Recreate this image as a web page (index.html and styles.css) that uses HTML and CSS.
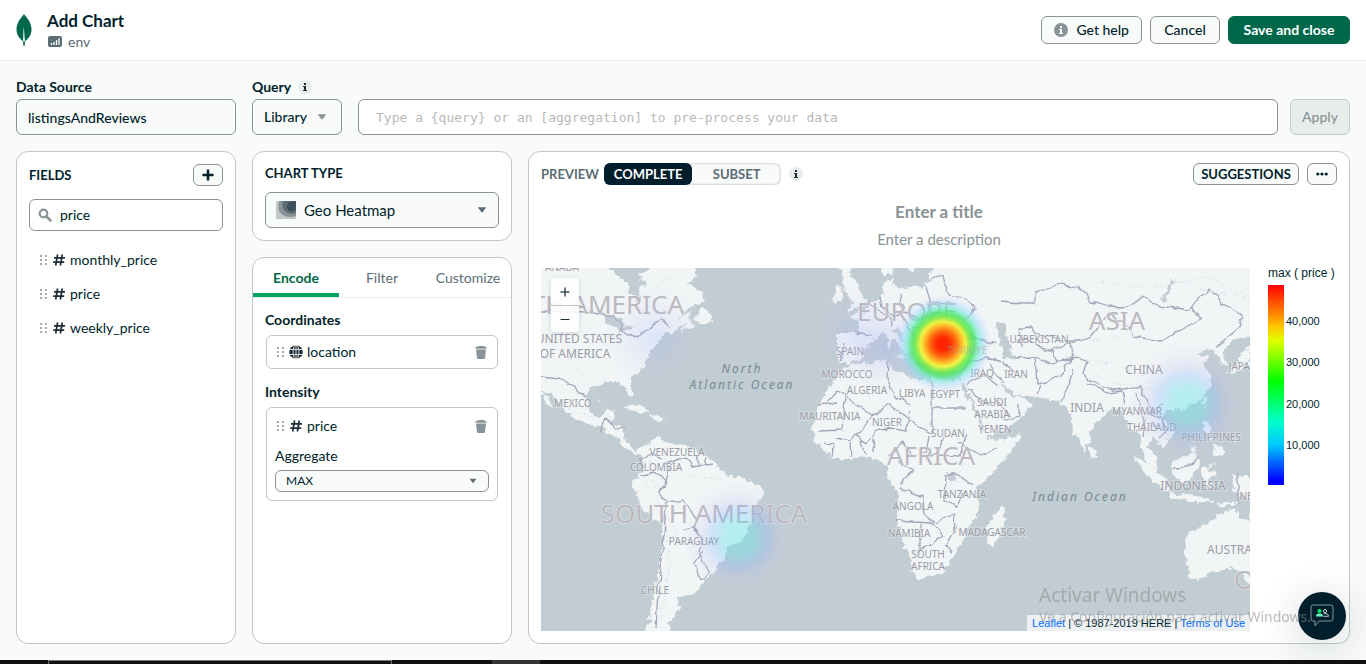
FILE: index.html
```html
<!DOCTYPE html>
<html lang="en">
<head>
<meta charset="utf-8">
<meta name="viewport" content="width=device-width, initial-scale=1">
<title>Add Chart</title>
<link rel="stylesheet" href="styles.css">
</head>
<body>
<svg class="defs" aria-hidden="true">
  <symbol id="drag" viewBox="0 0 8 12"><path fill="#a3abae" d="M0 1h2v2H0zM0 5h2v2H0zM0 9h2v2H0zM5 1h2v2H5zM5 5h2v2H5zM5 9h2v2H5z"/></symbol>
  <symbol id="hash" viewBox="0 0 12 12"><path d="M4.600 0.500 2.700 11.500M9.300 .5 7.400 11.500M1 3.800h11M.2 8.200h11" fill="none" stroke="#1c2d38" stroke-width="1.700"/></symbol>
  <symbol id="trash" viewBox="0 0 12 13"><path fill="#889397" d="M1 3.600h10L10 12q-.2 1-1 1H3q-.8 0-1-1z"/><path fill="#889397" d="M.5 1.500Q.5.8 2 .8L4 0h4l2 .8q1.500 0 1.500.7v1.300H.5z"/></symbol>
  <symbol id="caret" viewBox="0 0 10 6"><path d="M1.500 .3h7q.8 0 .3.600L5.500 5.200q-.5.600-1 0L1.200.900Q.7.300 1.500 .3z" fill="currentColor"/></symbol>
  <symbol id="info" viewBox="0 0 14 14"><circle cx="7" cy="7" r="7" class="info-disc"/><path class="info-mark" d="M6 3h2v2H6zM5 6h3v4h1v1H5v-1h1V7H5z"/></symbol>
</svg>

<header class="topbar">
  <svg class="leaf" viewBox="0 0 16 32" aria-label="MongoDB"><path fill="#00684a" d="M8 0c.8 1.800 7.500 7 7.500 15.500 0 6.500-4 9.500-6.500 12L8.600 32H7.500L7 27.500C4.500 25 .5 22 .5 15.500.5 7 7.200 1.800 8 0z"/><path fill="#fff" d="M7.700 12 7.100 26.500 8 28l.9-1.500z"/></svg>
  <div class="heading">
    <h1>Add Chart</h1>
    <p class="crumb"><svg width="14" height="11" viewBox="0 0 14 11" aria-hidden="true"><rect width="14" height="11" rx="2" fill="#5c6c75"/><path d="M3.500 7v2M6 6v3M8.500 4v5M11 2v7" stroke="#fff" stroke-width="1.300"/></svg>env</p>
  </div>
  <div class="actions">
    <button class="btn"><svg class="info-solid" width="14" height="14"><use href="#info"/></svg>Get help</button>
    <button class="btn">Cancel</button>
    <button class="btn primary">Save and close</button>
  </div>
</header>

<main class="workspace">
  <div class="source-row">
    <label for="source">Data Source</label>
    <span class="query-label"><label for="query">Query</label><svg class="info-soft" width="14" height="14"><use href="#info"/></svg></span>
    <input id="source" class="box source" value="listingsAndReviews" readonly>
    <div class="query-group">
      <button class="box library">Library<svg width="10" height="6"><use href="#caret"/></svg></button>
      <input id="query" class="box query" placeholder="Type a {query} or an [aggregation] to pre-process your data">
      <button class="box apply" disabled>Apply</button>
    </div>
  </div>

  <div class="panels">
    <section class="panel fields">
      <div class="fields-head"><h2>FIELDS</h2><button class="mini" aria-label="Add field"><svg width="12" height="12" viewBox="0 0 12 12"><path d="M6 .5v11M.5 6h11" stroke="#001e2b" stroke-width="2.500"/></svg></button></div>
      <div class="search">
        <svg width="14" height="14" viewBox="0 0 14 14" aria-hidden="true"><circle cx="5.500" cy="5.500" r="3.800" fill="none" stroke="#889397" stroke-width="2.200"/><path d="m8.500 8.500 4 4" stroke="#889397" stroke-width="2.500" stroke-linecap="round"/></svg>
        <input aria-label="Filter fields" value="price">
      </div>
      <ul>
        <li><svg width="8" height="12"><use href="#drag"/></svg><svg width="12" height="12"><use href="#hash"/></svg>monthly_price</li>
        <li><svg width="8" height="12"><use href="#drag"/></svg><svg width="12" height="12"><use href="#hash"/></svg>price</li>
        <li><svg width="8" height="12"><use href="#drag"/></svg><svg width="12" height="12"><use href="#hash"/></svg>weekly_price</li>
      </ul>
    </section>

    <div class="builder">
      <section class="panel chart-type">
        <h2><label for="type">CHART TYPE</label></h2>
        <div class="select type-select">
          <svg width="20" height="18" viewBox="0 0 20 18" aria-hidden="true"><rect width="20" height="18" rx="1" fill="#c1c7c6"/><path fill="#889397" d="M3 0h17v15q-6 2-11.500 0Q2 12 2.500 6z"/><path fill="#5c6c75" d="M7 0h13v12q-5 2-10-1Q5 7 7 0z"/><path fill="#3d4f58" d="M12 2q2-2 5-2h3v8q-3 3-6.500 2Q9.500 7.500 12 2z"/></svg>
          <select id="type"><option>Geo Heatmap</option></select>
          <svg class="arrow" width="10" height="6"><use href="#caret"/></svg>
        </div>
      </section>

      <section class="panel encode">
        <div class="tabs" role="tablist">
          <button role="tab" aria-selected="true">Encode</button>
          <button role="tab" aria-selected="false">Filter</button>
          <button role="tab" aria-selected="false">Customize</button>
        </div>
        <div class="channels">
          <h3>Coordinates</h3>
          <div class="card">
            <div class="encoded"><svg width="8" height="12"><use href="#drag"/></svg><svg width="14" height="14" viewBox="0 0 14 14"><circle cx="7" cy="7" r="6.800" fill="#1c2d38"/><g fill="none" stroke="#fff" stroke-width=".8"><ellipse cx="7" cy="7" rx="3" ry="7"/><path d="M7 0v14M0 4.500h14M0 9.500h14"/></g></svg><span>location</span><button aria-label="Remove location"><svg width="12" height="13"><use href="#trash"/></svg></button></div>
          </div>
          <h3>Intensity</h3>
          <div class="card tall">
            <div class="encoded"><svg width="8" height="12"><use href="#drag"/></svg><svg class="hash" width="14" height="12"><use href="#hash"/></svg><span>price</span><button aria-label="Remove price"><svg width="12" height="13"><use href="#trash"/></svg></button></div>
            <label for="agg">Aggregate</label>
            <div class="select agg-select"><select id="agg"><option>MAX</option></select><svg class="arrow" width="8" height="6"><use href="#caret"/></svg></div>
          </div>
        </div>
      </section>
    </div>

    <section class="panel preview">
      <div class="preview-head">
        <span class="caption">PREVIEW</span>
        <div class="toggle"><button aria-pressed="true">COMPLETE</button><button aria-pressed="false">SUBSET</button></div>
        <svg class="info-soft" width="14" height="14"><use href="#info"/></svg>
        <button class="mini suggestions">SUGGESTIONS</button>
        <button class="mini" aria-label="More"><svg width="12" height="4" viewBox="0 0 12 4" fill="#001e2b"><circle cx="1.800" cy="2" r="1.600"/><circle cx="6" cy="2" r="1.600"/><circle cx="10.200" cy="2" r="1.600"/></svg></button>
      </div>
      <input class="title" aria-label="Title" placeholder="Enter a title">
      <input class="description" aria-label="Description" placeholder="Enter a description">

      <div class="chart">
        <div class="map">
          <svg class="world" viewBox="541 268 709 363" role="img" aria-label="World map with price heat layer">
            <defs>
              <filter id="coast" x="0" y="0" width="100%" height="100%"><feTurbulence type="fractalNoise" baseFrequency=".16" numOctaves="3" seed="4"/><feDisplacementMap in="SourceGraphic" scale="8" xChannelSelector="R" yChannelSelector="G"/></filter>
              <filter id="wobble" x="0" y="0" width="100%" height="100%"><feTurbulence type="fractalNoise" baseFrequency=".12" numOctaves="1" seed="4"/><feDisplacementMap in="SourceGraphic" scale="7" xChannelSelector="R" yChannelSelector="G"/></filter>
              <radialGradient id="hot"><stop offset="0" stop-color="#ff2000"/><stop offset=".14" stop-color="#ff2a00"/><stop offset=".27" stop-color="#ff6a0c" stop-opacity=".98"/><stop offset=".38" stop-color="#ffb81f" stop-opacity=".95"/><stop offset=".46" stop-color="#f2f23a" stop-opacity=".93"/><stop offset=".56" stop-color="#74ea4a" stop-opacity=".92"/><stop offset=".64" stop-color="#4fe668" stop-opacity=".85"/><stop offset=".74" stop-color="#6feccb" stop-opacity=".65"/><stop offset=".84" stop-color="#94d8ff" stop-opacity=".4"/><stop offset="1" stop-color="#c9c9ff" stop-opacity="0"/></radialGradient>
              <radialGradient id="cool"><stop offset="0" stop-color="#60e6e6" stop-opacity=".46"/><stop offset=".3" stop-color="#68dfea" stop-opacity=".4"/><stop offset=".5" stop-color="#80b4ff" stop-opacity=".28"/><stop offset=".72" stop-color="#bcb8ee" stop-opacity=".16"/><stop offset="1" stop-color="#d4c8d8" stop-opacity="0"/></radialGradient>
              <radialGradient id="faint"><stop offset="0" stop-color="#96afff" stop-opacity=".24"/><stop offset=".5" stop-color="#b4b8f4" stop-opacity=".14"/><stop offset="1" stop-color="#d0c8e0" stop-opacity="0"/></radialGradient>
            </defs>
            <rect x="541" y="268" width="709" height="363" fill="#c2cdd3"/>
            <g filter="url(#coast)">
              <g fill="#f1f5f6">
                <path d="M530 255H608V268L620 278 628 285 630 294 637 302 643 300 640 290 645 283 639 275 650 268V255H696V275L687 283 703 292 704 302 690 307 678 319 690 312 688 319 695 326 680 332 687 323 673 332 663 336 657 345 650 351 648 362 640 372 632 378 631 385 634 394 629 397 624 386 618 382 607 382 601 385 590 387 586 398 590 412 600 417 606 410 615 409 613 418 611 424 622 427 624 440 636 450 646 447 657 437 672 444 687 445 698 452 712 459 717 464 722 473 747 480 762 488 764 495 754 507 752 520 743 540 727 547 725 556 713 573 702 582 697 593 678 598 680 610 668 623 673 640H646L650 613 655 590 660 563 663 540 662 523 652 518 643 510 637 493 632 483 642 470 643 457 623 447 618 437 600 428 570 417 561 406 555 397 541 387 530 380z"/>
                <path d="M701 309 707 311 713 321 705 324 692 321zM624 407 635 404 650 412 641 413zM650 415 659 416 666 420 655 421zM688 438l2 6M541 389l8 10 3 8-5-3-6-10z"/>
                <path d="M840 255H854L850 276 857 282 860 292 867 302 861 309 847 312 852 302 846 294 842 278zM836 283 843 287 841 300 832 304 835 291z"/>
                <path d="M879 255H902L893 268 891 275 882 273zM906 255H918L914 268 910 271zM884 283 892 277 894 286 900 289 911 286 923 286 931 281 926 274 937 267V255H1260V334L1233 340 1222 352 1228 363 1222 366 1219 357 1210 348 1202 351 1198 355 1209 356 1203 366 1211 376 1210 387 1199 402 1179 410 1166 410 1163 418 1175 430 1173 437 1162 447 1151 437 1148 446 1157 457 1158 471 1147 463 1141 446 1139 431 1129 427 1120 408 1111 409 1093 426 1090 440 1084 451 1074 433 1069 411 1058 402 1041 398 1015 394 1005 386 1001 383 1008 395 1024 397 1033 405 1023 416 1009 427 985 438 981 419 971 398 963 383 961 388 971 403 980 424 986 439 1006 440 1022 433 1016 445 1006 458 991 474 977 488 979 515 967 528 962 542 942 573 918 579 913 570 905 547 897 520 899 492 887 477 890 465 877 460 863 456 840 460 826 454 816 441 812 430 817 410 821 398 832 384 842 369 850 365 887 360 894 370 917 380 933 380 962 379 961 371 935 371 928 362 924 367 920 364 907 345 898 327 892 331 910 348 907 354 895 342 882 333 870 341 864 355 850 364 838 362 837 335 858 333 860 321 849 315 864 311 871 303 881 298z"/>
                <path d="M889 335h3v15h-4zM895 356l10-2-1 5zM1002 506 1006 520 994 546 987 543 988 524z"/>
                <path d="M1240 354 1250 348V365L1233 372 1226 374 1231 366 1240 364zM1090 446l5 4 1 7-4 2-2-6zM1204 398l3-2-2 10-3-1zM1205 419l5 6 0 10 5 6-6-3-5-8zM1214 444l9 4 0 9-10-3zM1190 450l8-6-6 10z"/>
                <path d="M1133 456 1147 462 1166 480 1170 493 1157 485 1143 470zM1173 462 1196 452 1200 462 1193 473 1187 485 1174 478zM1170 493 1204 497 1215 502 1194 502 1170 497zM1202 468 1219 464 1207 469 1218 475 1208 478 1214 489 1202 478zM1233 474 1260 480V504L1244 497 1232 489zM1215 504l25-3-15 6z"/>
                <path d="M1260 506 1253 506 1249 522 1237 517 1237 508 1223 512 1210 522 1201 528 1187 533 1184 550 1190 578 1197 580 1213 572 1233 568 1244 575 1248 583 1260 587z"/>
              </g>
              <path fill="#c2cdd3" d="M997 322l8 2 3 16 6 20-9-2-6-15zM939 332l18-9 13 7 8 10-20 1-18-1zM602 316l13-2 11 12 8 1-13 5-14-9zM945 474h10v6h-8zM1160 300l12-21 3 2-10 20z"/>
            </g>
            <path class="relief" filter="url(#coast)" d="M641 455 646 490 665 520 670 565 660 625M649 456 657 500 674 525 677 552M665 458 690 475 722 480M1055 350 1082 337 1105 342 1126 336M1080 360 1110 363 1142 374 1160 392M1100 282 1150 288 1210 276 1250 300M1096 375 1120 385 1155 390M565 355 585 380 610 418M552 398 577 413 600 420M900 335 922 344M950 490 970 455 988 440M1180 275 1200 290 1250 296M655 286 664 281 672 277"/>
            <path class="borders" filter="url(#wobble)" d="M541 311 592 312 605 315 619 321 626 336 638 335 650 328 663 318 669 328M541 377 560 379 572 385 585 396M600 431l6-12 4 5 10 6 6-3M643 471l-3-12 13-4 7 3M640 476 655 472 667 482 658 493 669 503 683 500 690 510 697 519 694 530 703 538 699 552 710 573 699 578 695 563 704 550M666 503 664 535 662 560 658 590 656 628M665 463 687 458 692 467 713 464M697 456l2 8M705 456l2 9M670 468 664 487M683 530l10-3 5 5M856 333 871 336M844 344 840 363M868 300 876 309 889 316 892 326M880 298 882 307 892 315 910 314 918 318 931 315 939 325M900 294 902 310M925 284 930 300 926 316M930 280 942 275 945 292 968 300 975 308 964 322M931 302 950 303M937 310 930 324 913 329M905 319 914 337 925 342M889 361 888 382 897 398 911 404M837 390 872 416 888 405 898 410M845 397 843 430 818 431M872 415 862 430 849 441 835 438M818 405 838 403M837 390 826 402M932 381V435L916 425 898 411M933 408H966M910 412 906 431 890 428 875 432 867 444 856 435M929 437 926 452 913 456 902 442 888 457M898 462 912 470 900 485M942 439 938 455 959 456 967 435M958 442 975 452 982 455 997 449M944 475 958 475 972 485M945 475 944 500 957 507 966 490M898 489 909 490 912 495 923 496 924 514 935 522 955 514 956 533 944 545 954 552M895 521 932 523 944 536 930 547 920 548 919 553M920 524V556M926 457 938 454M825 443l8 2-1 12M850 442l1 15M861 440l3 15M874 438l-1 15M960 373 970 362 987 358 997 377 1004 383M968 384 984 374 998 385M987 358 1002 362 1014 371M965 336 985 341 996 344M1000 301 1021 303 1035 303 1035 292 1054 286 1061 282 1072 289 1080 286 1090 302 1100 304 1110 307 1123 308 1143 297 1160 306 1190 310 1195 300 1210 290 1219 296 1223 304 1243 316 1240 327 1216 347M1191 306 1201 319 1178 331 1160 341 1133 336 1128 325 1108 314M1108 313 1090 337 1080 341 1068 341 1075 355 1057 363 1053 351 1037 347 1028 338 1017 340 1022 347 1020 329 1032 326 1035 335 1051 336 1067 341M1052 350 1070 342M1015 358 1033 357 1053 365 1073 357 1065 365 1062 374 1047 382 1037 384 1035 358M1073 357 1087 361 1083 373 1092 382 1111 390 1125 389 1140 385 1143 395 1153 411 1164 404M1088 383 1108 393 1122 391 1125 405M1137 393 1139 409 1145 420 1143 437M1149 413 1161 418 1166 432 1158 438M1150 422 1157 430M1037 394 1041 385M1061 402 1067 388 1073 370M1174 468 1189 467 1198 456M1238 474v30M1003 421 1019 416 1019 405M994 397 1011 417M969 389 982 401 995 403"/>
            <g class="labels minor">
              <text x="562" y="271">ANADA</text><text x="573" y="407">MEXICO</text><text x="677" y="456">VENEZUELA</text><text x="656" y="471">COLOMBIA</text><text x="694" y="545">PARAGUAY</text><text x="655" y="594">CHILE</text><text x="850" y="355">SPAIN</text><text x="847" y="378">MOROCCO</text><text x="867" y="394">ALGERIA</text><text x="912" y="397">LIBYA</text><text x="945" y="398">EGYPT</text><text x="830" y="420">MAURITANIA</text><text x="887" y="426">NIGER</text><text x="948" y="437">SUDAN</text><text x="982" y="377">IRAQ</text><text x="1016" y="378">IRAN</text><text x="992" y="406">SAUDI</text><text x="992" y="418">ARABIA</text><text x="995" y="433">YEMEN</text><text x="1039" y="343">UZBEKISTAN</text><text x="1137" y="415">MYANMAR</text><text x="1152" y="431">THAILAND</text><text x="1211" y="441">PHILIPPINES</text><text x="962" y="498">TANZANIA</text><text x="913" y="510">ANGOLA</text><text x="909" y="537">NAMIBIA</text><text x="992" y="536">MADAGASCAR</text><text x="928" y="558">SOUTH</text><text x="928" y="570">AFRICA</text><text x="1243" y="370">JAPAN</text><text x="1246" y="500">NE</text>
            </g>
            <g class="labels medium"><text class="end" x="622" y="343">UNITED STATES</text><text x="575" y="358">OF AMERICA</text><text x="1144" y="374">CHINA</text><text x="1087" y="412">INDIA</text><text x="1193" y="490">INDONESIA</text><text class="start" x="1207" y="554">AUSTRALIA</text></g>
            <g class="labels continent"><text class="end" x="684" y="314">NORTH AMERICA</text><text x="907" y="321">EUROPE</text><text x="1117" y="330">ASIA</text><text x="931" y="465">AFRICA</text><text x="704" y="523">SOUTH AMERICA</text><text class="start" x="1234" y="589">OCEANIA</text></g>
            <g class="labels ocean"><text x="742" y="373">North</text><text x="742" y="389">Atlantic Ocean</text><text x="1080" y="501">Indian Ocean</text></g>
            <circle cx="655" cy="338" r="52" fill="url(#faint)"/><circle cx="859" cy="335" r="54" fill="url(#faint)"/><circle cx="890" cy="350" r="42" fill="url(#faint)"/>
            <circle cx="739" cy="538" r="57" fill="url(#cool)"/><circle cx="1187" cy="404" r="60" fill="url(#cool)"/><circle cx="943" cy="344" r="49" fill="url(#hot)"/>
            <g class="labels minor hazy"><text x="967" y="354">TÜRKIYE</text></g>
          </svg>
          <div class="zoom"><button aria-label="Zoom in"><svg width="10" height="10" viewBox="0 0 10 10"><path d="M5 .5v9M.5 5h9" stroke="#3d4f58" stroke-width="1.500"/></svg></button><button aria-label="Zoom out"><svg width="10" height="10" viewBox="0 0 10 10"><path d="M.5 5.500h9" stroke="#1c2d38"/></svg></button></div>
          <div class="attribution"><a href="#">Leaflet</a> | © 1987-2019 HERE | <a href="#">Terms of Use</a></div>
        </div>
        <aside class="legend">
          <p>max ( price )</p>
          <div class="scale"><div class="ramp"></div><ol><li>40,000</li><li>30,000</li><li>20,000</li><li>10,000</li></ol></div>
        </aside>
      </div>
    </section>
  </div>
</main>

<footer class="taskbar"><span class="search-edge"></span><span class="active-edge"></span></footer>
<button class="chat" aria-label="Community chat"><svg width="24" height="24" viewBox="0 0 24 24"><path d="M3 1h18q2 0 2 2v12q0 2-2 2H9l-4 5v-5H3q-2 0-2-2V3q0-2 2-2z" fill="none" stroke="#889397"/><circle cx="9.500" cy="7" r="2" fill="#00ed64"/><path d="M6 12.500q0-3 3-3h1q3 0 3 3z" fill="#71f6ba"/><g fill="none" stroke="#c1c7c6"><circle cx="15" cy="7" r="1.600"/><path d="M13.500 9.700q5-.7 5 2.600h-5"/></g></svg></button>
<div class="activation"><strong>Activar Windows</strong><span>Ve a Configuración para activar Windows.</span></div>
</body>
</html>
```
FILE: styles.css
```css
* { box-sizing: border-box; }
body { margin: 0; min-height: 100vh; display: flex; flex-direction: column; background: #f9fbfa; color: #001e2b; font: 14px/20px Lato, "Open Sans", sans-serif; }
h1, h2, h3, p, ul, ol { margin: 0; padding: 0; }
ul, ol { list-style: none; }
button, input, select { font: inherit; color: inherit; margin: 0; }
button { display: flex; align-items: center; justify-content: center; padding: 0; }
svg { display: block; flex: none; }
.defs { position: absolute; width: 0; height: 0; }

.topbar { display: flex; align-items: center; height: 61px; padding: 0 16px; background: #fff; border-bottom: 1px solid #e8edeb; }
.leaf { width: 16px; height: 32px; }
.heading { margin-left: 15px; padding-top: 1px; }
.heading h1 { font-size: 17px; line-height: 22px; font-weight: 700; }
.crumb { display: flex; align-items: center; gap: 6px; margin-left: 1px; color: #5c6c75; }
.actions { display: flex; gap: 8px; margin-left: auto; }
.btn { height: 28px; padding: 0 12px; gap: 8px; border: 1px solid #889397; border-radius: 6px; background: #f9fbfa; font-weight: 500; }
.btn:nth-child(2) { min-width: 70px; }
.primary { min-width: 122px; background: #00684a; border-color: #00684a; color: #fff; font-weight: 700; }
.info-solid { --disc: #889397; --mark: #fff; }
.info-soft { --disc: #e8edeb; --mark: #1c2d38; }
.info-disc { fill: var(--disc); }
.info-mark { fill: var(--mark); }

.workspace { flex: 1; display: flex; flex-direction: column; gap: 16px; padding: 16px; }
.source-row { display: grid; grid-template-columns: 220px 1fr; column-gap: 16px; row-gap: 2px; font-weight: 700; }
.query-label { display: flex; align-items: center; gap: 7px; }
.query-group { display: flex; }
.box { height: 36px; border: 1px solid #889397; border-radius: 6px; background: #f9fbfa; padding: 0 11px; font-weight: 500; }
.source { width: 100%; }
.library { width: 90px; padding: 0 14px 0 11px; justify-content: space-between; color: #001e2b; }
.library svg { color: #889397; }
.query { flex: 1; min-width: 0; margin: 0 12px 0 16px; padding: 0 17px; background: #fff; font: 13px "DejaVu Sans Mono", monospace; }
.query::placeholder { color: #b8b8b8; opacity: 1; }
.apply { width: 60px; background: #e8edeb; border-color: #c1c7c6; color: #889397; }

.source-row + .panels { flex: 1; }
.panels { display: grid; grid-template-columns: 220px 260px minmax(0, 1fr); gap: 16px; }
.panel { background: #fff; border: 1px solid #c1c7c6; border-radius: 12px; padding: 12px; }
h2 { font-size: 13px; line-height: 20px; font-weight: 700; }
h3 { font-size: 14px; line-height: 20px; font-weight: 700; }
.mini { width: 30px; height: 22px; border: 1px solid #889397; border-radius: 6px; background: #f9fbfa; }
.fields-head { display: flex; justify-content: space-between; align-items: center; }
.search { display: flex; align-items: center; gap: 8px; height: 32px; margin: 13px 0 12px; padding: 0 8px; border: 1px solid #889397; border-radius: 6px; }
.search input { flex: 1; min-width: 0; border: 0; padding: 0; outline: 0; background: none; }
.fields li { display: flex; align-items: center; gap: 5px; height: 34px; padding-left: 11px; }

.builder { display: flex; flex-direction: column; gap: 16px; }
.chart-type { padding-top: 11px; }
.chart-type h2 { margin-bottom: 9px; }
.select { position: relative; display: flex; align-items: center; height: 36px; border: 1px solid #889397; border-radius: 6px; background: #f9fbfa; padding: 0 10px; }
.select select { flex: 1; min-width: 0; height: 100%; appearance: none; border: 0; background: none; padding: 0 8px; }
.arrow { color: #5c6c75; }
.type-select { padding-right: 11px; font-size: 15px; }
.encode { flex: 1; padding: 0; overflow: hidden; }
.tabs { display: grid; grid-template-columns: repeat(3, 1fr); height: 40px; border-bottom: 1px solid #e8edeb; }
.tabs button { border: 0; border-bottom: 4px solid transparent; background: none; color: #5c6c75; padding-top: 4px; }
.tabs [aria-selected="true"] { color: #00684a; font-weight: 700; border-bottom-color: #00a35c; border-radius: 3px 3px 0 0; }
.channels { padding: 12px 13px 12px 12px; }
.card { min-height: 34px; margin: 5px 0 13px 1px; padding: 6px 8px; border: 1px solid #c1c7c6; border-radius: 6px; }
.tall { padding: 8px; }
.encoded { display: flex; align-items: center; gap: 4px; }
.encoded svg:first-child { margin-left: 2px; }
.encoded button { margin-left: auto; border: 0; background: none; }
.encoded button svg { margin: 0 2px; }
.tall label { display: block; margin: 10px 0 4px; }
.agg-select { height: 22px; font-size: 12px; padding-left: 2px; }
.agg-select .arrow { margin-right: 1px; }

.preview { display: flex; flex-direction: column; padding: 11px 12px 12px; }
.preview-head { display: flex; align-items: center; height: 22px; font-size: 13px; font-weight: 700; }
.caption { color: #5c6c75; margin-right: 5px; }
.toggle { display: grid; grid-template-columns: 1fr 1fr; width: 177px; height: 22px; margin-right: 8px; border-radius: 6px; background: #f9fbfa; box-shadow: inset 0 0 2px 1px #d0d6d4; }
.toggle button { border: 0; border-radius: 6px; background: none; color: #5c6c75; }
.toggle [aria-pressed="true"] { background: #001e2b; color: #fff; }
.suggestions { width: 106px; margin: 0 8px 0 auto; }
.title, .description { width: 100%; border: 0; padding: 0; background: none; text-align: center; outline: 0; }
.title { height: 28px; margin-top: 12px; font-size: 17px; font-weight: 700; }
.description { height: 28px; margin-bottom: 15px; font-size: 15px; }
.title::placeholder, .description::placeholder { color: #889397; opacity: 1; }
.chart { display: grid; grid-template-columns: minmax(0, 1fr) 69px; gap: 18px; align-items: start; }
.map { position: relative; overflow: hidden; }
.world { width: 100%; height: auto; }
.relief { fill: none; stroke: #dce4e8; stroke-width: 1; stroke-dasharray: 3 2; }
.borders { fill: none; stroke: #a5a5ba; stroke-width: 1.300; stroke-linejoin: round; }
.labels { font-family: "Noto Sans", sans-serif; fill: #9c9ba5; text-anchor: middle; stroke: #f1f5f6; stroke-opacity: .4; stroke-width: 2px; paint-order: stroke; }
.minor { font-size: 10px; }
.medium { font-size: 12px; }
.hazy { opacity: .5; stroke: none; }
.continent { font-size: 26px; fill: #bcb9bf; }
.ocean { font-size: 12px; font-style: italic; letter-spacing: 2px; fill: #758994; stroke: none; }
.start { text-anchor: start; }
.end { text-anchor: end; }
.zoom { position: absolute; left: 10px; top: 10px; width: 28px; border-radius: 4px; background: rgba(255, 255, 255, .9); box-shadow: 0 1px 5px rgba(0, 30, 43, .16); }
.zoom button { width: 28px; height: 27px; border: 0; background: none; }
.zoom button + button { border-top: 1px solid #c1c7c6; }
.attribution { position: absolute; right: 0; bottom: 0; padding: 0 5px; background: rgba(255, 255, 255, .7); font: 11px/16px "Liberation Sans", Arial, sans-serif; }
.attribution a { color: #016bf8; text-decoration: none; }
.legend { font: 11px/12px "Liberation Sans", Arial, sans-serif; white-space: nowrap; }
.legend p { margin-bottom: 6px; font-size: 12px; line-height: 11px; }
.scale { display: flex; gap: 2px; height: 200px; }
.ramp { width: 16px; background: linear-gradient(red, #ff9e00 17%, #ffc800 21%, #dfff00 28%, #0f0 48%, #00ffc8 68%, #00c8ff 80%, #00f 98%); }
.scale ol { display: flex; flex-direction: column; justify-content: space-between; padding: 30px 0 34px; }

.taskbar { display: flex; height: 4px; background: #101010; }
.search-edge { width: 344px; margin: 0 100px 0 48px; border: solid #777; border-width: 1px 1px 0; }
.active-edge { width: 48px; background: #333; }
.chat { position: fixed; right: 20px; bottom: 24px; width: 48px; height: 48px; border: 0; border-radius: 50%; background: #001e2b; box-shadow: 0 6px 40px rgba(0, 30, 43, .2); }
.activation { position: fixed; right: 55px; bottom: 37px; display: flex; flex-direction: column; color: rgba(145, 145, 145, .6); font-family: "Noto Sans", sans-serif; pointer-events: none; }
.activation strong { font-size: 19px; line-height: 24px; font-weight: 400; }
.activation span { font-size: 14px; line-height: 20px; }
```
